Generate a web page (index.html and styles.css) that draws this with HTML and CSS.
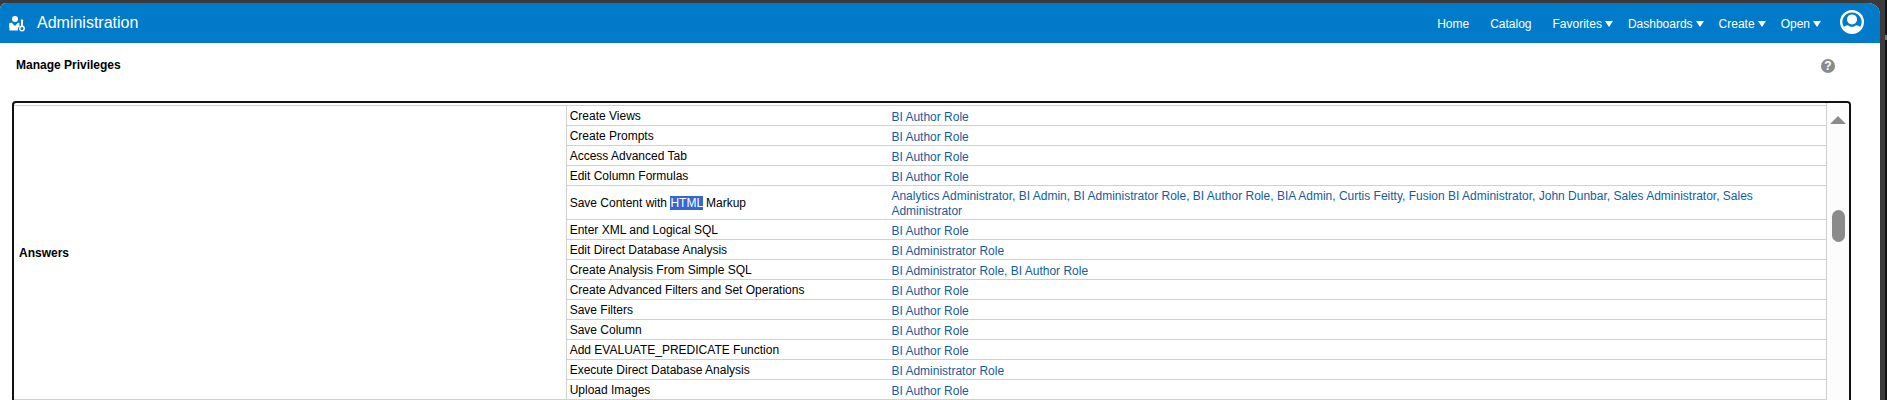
FILE: index.html
```html
<!DOCTYPE html>
<html lang="en">
<head>
    <meta charset="UTF-8">
    <meta name="viewport" content="width=device-width, initial-scale=1.0">
    <title>Administration</title>
    <link rel="stylesheet" href="styles.css">
</head>
<body>
    <div class="page">
        <header class="header">
            <svg class="admin-icon" viewBox="0 0 16 16" fill="#fff" aria-hidden="true">
                <circle cx="6" cy="3" r="3"/>
                <path d="M0 7.5 2.500 6.500 6 10l3.200-3.400 1.300.6v3.300A3.400 3.400 0 0 0 9 14.500H.5z"/>
                <path d="M12 4.200 13 3l1 1.200V10h-2z"/>
                <circle cx="13" cy="12.500" r="2.200" fill="none" stroke="#fff" stroke-width="1.400"/>
            </svg>
            <h1>Administration</h1>
            <nav class="nav">
                <a class="plain" href="#">Home</a>
                <a class="plain" href="#">Catalog</a>
                <button type="button">Favorites <span class="caret"></span></button>
                <button type="button">Dashboards <span class="caret"></span></button>
                <button type="button">Create <span class="caret"></span></button>
                <button type="button">Open <span class="caret"></span></button>
            </nav>
            <button type="button" class="avatar" aria-label="My account">
                <svg viewBox="0 0 24 24">
                    <circle cx="12" cy="12" r="12" fill="#fff"/>
                    <path d="M12 2.400a9.600 9.600 0 0 0-8.200 14.500c1.100-1 2.500-1.500 4.200-1.700 2.300 2.200 5.700 2.200 8 0 1.700.2 3.100.7 4.200 1.700A9.600 9.600 0 0 0 12 2.400z" fill="#007ac9"/>
                    <circle cx="12" cy="9.400" r="5" fill="#fff"/>
                </svg>
            </button>
        </header>

        <div class="title-bar">
            <h2>Manage Privileges</h2>
            <a class="help" href="#" aria-label="Help">?</a>
        </div>

        <div class="panel">
            <div class="table-area">
                <table>
                    <tbody>
                        <tr>
                            <th rowspan="14" scope="rowgroup">Answers</th>
                            <td class="name">Create Views</td>
                            <td class="roles"><a href="#">BI Author Role</a></td>
                        </tr>
                        <tr>
                            <td class="name">Create Prompts</td>
                            <td class="roles"><a href="#">BI Author Role</a></td>
                        </tr>
                        <tr>
                            <td class="name">Access Advanced Tab</td>
                            <td class="roles"><a href="#">BI Author Role</a></td>
                        </tr>
                        <tr>
                            <td class="name">Edit Column Formulas</td>
                            <td class="roles"><a href="#">BI Author Role</a></td>
                        </tr>
                        <tr>
                            <td class="name">Save Content with <mark>HTML</mark> Markup</td>
                            <td class="roles"><a href="#">Analytics Administrator, BI Admin, BI Administrator Role, BI Author Role, BIA Admin, Curtis Feitty, Fusion BI Administrator, John Dunbar, Sales Administrator, Sales Administrator</a></td>
                        </tr>
                        <tr>
                            <td class="name">Enter XML and Logical SQL</td>
                            <td class="roles"><a href="#">BI Author Role</a></td>
                        </tr>
                        <tr>
                            <td class="name">Edit Direct Database Analysis</td>
                            <td class="roles"><a href="#">BI Administrator Role</a></td>
                        </tr>
                        <tr>
                            <td class="name">Create Analysis From Simple SQL</td>
                            <td class="roles"><a href="#">BI Administrator Role, BI Author Role</a></td>
                        </tr>
                        <tr>
                            <td class="name">Create Advanced Filters and Set Operations</td>
                            <td class="roles"><a href="#">BI Author Role</a></td>
                        </tr>
                        <tr>
                            <td class="name">Save Filters</td>
                            <td class="roles"><a href="#">BI Author Role</a></td>
                        </tr>
                        <tr>
                            <td class="name">Save Column</td>
                            <td class="roles"><a href="#">BI Author Role</a></td>
                        </tr>
                        <tr>
                            <td class="name">Add EVALUATE_PREDICATE Function</td>
                            <td class="roles"><a href="#">BI Author Role</a></td>
                        </tr>
                        <tr>
                            <td class="name">Execute Direct Database Analysis</td>
                            <td class="roles"><a href="#">BI Administrator Role</a></td>
                        </tr>
                        <tr>
                            <td class="name">Upload Images</td>
                            <td class="roles"><a href="#">BI Author Role</a></td>
                        </tr>
                    </tbody>
                </table>
            </div>
            <div class="scrollbar">
                <div class="scroll-up"></div>
                <div class="scroll-thumb"></div>
            </div>
        </div>
    </div>
</body>
</html>
```
FILE: styles.css
```css
* {
    box-sizing: border-box;
}
body {
    margin: 0;
    height: 100vh;
    padding: 3px 5px 0 0;
    overflow: hidden;
    background-color: #3a3a3a;
    border-right: 2px solid #141414;
    font-family: "Liberation Sans", Arial, sans-serif;
    font-size: 12px;
    line-height: 15px;
    color: #000;
}
/* Marker on the window edge */
body::after {
    content: "";
    position: absolute;
    top: 35px;
    right: 0;
    width: 2px;
    height: 5px;
    background-color: #777;
}
a {
    text-decoration: none;
}
button {
    padding: 0;
    border: none;
    background: none;
    font: inherit;
    color: inherit;
    cursor: pointer;
}
.page {
    display: flex;
    flex-direction: column;
    height: 100%;
    background-color: #fff;
    border-radius: 6px 12px 0 0;
    overflow: hidden;
}

/* Header */
.header {
    display: flex;
    align-items: center;
    flex: none;
    height: 40px;
    padding: 0 16px 0 9px;
    background-color: #007ac9;
    color: #fff;
}
.admin-icon {
    width: 16px;
    height: 16px;
    margin-top: 2px;
}
.header h1 {
    margin: 0 0 0 12px;
    font-size: 16px;
    font-weight: normal;
    line-height: 20px;
}
.nav {
    display: flex;
    align-items: center;
    gap: 15px;
    margin: 2px 19px 0 auto;
}
.nav a {
    color: #fff;
}
.nav .plain {
    padding-right: 6px;
}
.nav button {
    display: flex;
    align-items: center;
    gap: 3px;
}
.caret {
    border: 4px solid transparent;
    border-top: 6px solid #fff;
    border-bottom: none;
}
.avatar {
    width: 24px;
    height: 24px;
    margin-bottom: 2px;
}
.avatar svg {
    display: block;
}

/* Page title */
.title-bar {
    display: flex;
    justify-content: space-between;
    align-items: flex-start;
    flex: none;
    height: 58px;
    padding: 15px 45px 0 16px;
}
.title-bar h2 {
    margin: 0;
    font-size: 12px;
}
.help {
    width: 14px;
    height: 14px;
    margin-top: 1px;
    border-radius: 50%;
    background-color: #878b8e;
    color: #fff;
    font-weight: bold;
    line-height: 14px;
    text-align: center;
}

/* Privileges table */
.panel {
    display: flex;
    flex: 1;
    min-height: 0;
    margin: 0 29px 0 12px;
    border: 2px solid #111;
    border-bottom: none;
    border-radius: 4px 4px 0 0;
    overflow: hidden;
}
.table-area {
    flex: 1;
    padding-top: 2px;
    border-right: 1px solid #d0d0d0;
}
table {
    width: 100%;
    table-layout: fixed;
    border-collapse: separate;
    border-spacing: 0;
    border-top: 1px solid #d0d0d0;
}
th,
td {
    padding: 3px 3px 1px;
    border-bottom: 1px solid #d0d0d0;
    text-align: left;
    vertical-align: middle;
}
th {
    width: 30.5%;
    padding-left: 5px;
    border-right: 1px solid #d0d0d0;
}
.name {
    width: 17.7%;
}
.roles {
    padding: 3px 60px 0 4px;
}
.roles a {
    color: #145c9e;
}
mark {
    background-color: #3367d1;
    color: #fff;
}

/* Scrollbar */
.scrollbar {
    display: flex;
    flex-direction: column;
    align-items: center;
    width: 22px;
    padding-top: 13px;
    background-color: #fcfcfc;
}
.scroll-up {
    border: 8px solid transparent;
    border-top: none;
    border-bottom-color: #8b8b8b;
}
.scroll-thumb {
    width: 13px;
    height: 32px;
    margin-top: 86px;
    border-radius: 7px;
    background-color: #8b8b8b;
}
```
